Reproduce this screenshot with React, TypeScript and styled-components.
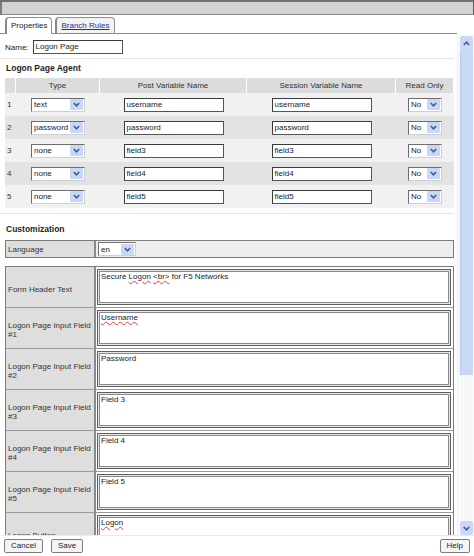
import React from 'react';
import styled, { createGlobalStyle } from 'styled-components';

const Global = createGlobalStyle`
  html, body { margin: 0; padding: 0; background: #fff; }
  body { font-family: "Liberation Sans", Arial, sans-serif; font-size: 8px; color: #222; }
  * { box-sizing: border-box; }
`;

const Frame = styled.div`
  width: 474px;
  height: 556px;
  display: flex;
  flex-direction: column;
  overflow: hidden;
  background: #fff;
`;

const TitleBar = styled.div`
  flex: none;
  height: 15px;
  background: #d2d2d2;
  border-top: 2px solid #707070;
  border-left: 2px solid #7a7a7a;
  border-right: 1px solid #5c5c5c;
  border-bottom: 1px solid #8a8a8a;
`;

const TabStrip = styled.div`
  flex: none;
  height: 19px;
  width: 457px;
  display: flex;
  align-items: flex-end;
  gap: 3px;
  padding-left: 5px;
  border-bottom: 1px solid #8c8c8c;
`;

const Tab = styled.div<{ $active?: boolean }>`
  height: ${p => (p.$active ? 17 : 16)}px;
  margin-bottom: ${p => (p.$active ? -1 : 0)}px;
  padding: 0 4px;
  line-height: 15px;
  border: 1px solid #8f8f8f;
  border-left: 2px solid #8a8a8a;
  border-bottom: none;
  border-radius: 4px 4px 0 0;
  background: ${p => (p.$active ? '#fff' : '#f3f3f3')};
  color: ${p => (p.$active ? '#222' : '#2c2c9c')};
  text-decoration: ${p => (p.$active ? 'none' : 'underline')};
`;

const Body = styled.div`
  flex: 1;
  display: flex;
  min-height: 0;
`;

const Content = styled.div`
  width: 457px;
  flex: none;
  overflow: hidden;
  padding-left: 5px;
  padding-right: 3px;
`;

const Scrollbar = styled.div`
  width: 17px;
  flex: none;
  display: flex;
  flex-direction: column;
  padding: 2px 1px 0 2px;
  background: #fafafa;
  border-left: 1px solid #efefef;
`;

const ScrollButton = styled.div`
  height: 14px;
  flex: none;
  display: flex;
  align-items: center;
  justify-content: center;
  background: #c9d8f7;
  border-radius: 2px;
`;

const Thumb = styled.div`
  height: 325px;
  flex: none;
  background: #c9d8f7;
  border-left: 1px solid #b8c9ee;
`;

const Track = styled.div`
  flex: 1;
  background: #f8f8f8;
`;

const NameRow = styled.div`
  margin-top: 6px;
  height: 14px;
  display: flex;
  align-items: center;
  gap: 4px;
`;

const TextInput = styled.div<{ $w: number }>`
  width: ${p => p.$w}px;
  height: 14px;
  line-height: 12px;
  padding: 0 2px;
  border: 1px solid #3a3a3a;
  border-right-color: #555;
  border-bottom-color: #555;
  background: #fff;
  color: #222;
  white-space: nowrap;
  overflow: hidden;
`;

const Separator = styled.div<{ $top: number }>`
  margin-top: ${p => p.$top}px;
  margin-left: -5px;
  height: 1px;
  background: #e4e4e4;
`;

const SectionTitle = styled.div<{ $top: number }>`
  margin-top: ${p => p.$top}px;
  height: 12px;
  line-height: 12px;
  padding-left: 1px;
  font-weight: bold;
  font-size: 8.5px;
  color: #1e1e1e;
`;

const AgentTable = styled.div`
  margin-top: 4px;
  width: 449px;
  display: grid;
  grid-template-columns: 11px 84px 147px 149px 58px;
`;

const HeadCell = styled.div`
  height: 15px;
  line-height: 15px;
  background: #dcdcdc;
  border-right: 1px solid #fff;
  text-align: center;
  color: #333;
  &:last-child { border-right: none; }
`;

const Cell = styled.div<{ $alt: boolean; $left?: boolean }>`
  height: 23px;
  display: flex;
  align-items: center;
  justify-content: ${p => (p.$left ? 'flex-start' : 'center')};
  padding-left: ${p => (p.$left ? 2 : 0)}px;
  background: ${p => (p.$alt ? '#e3e3e3' : '#f1f1f1')};
  color: #333;
`;

const SelectBox = styled.div<{ $w: number }>`
  width: ${p => p.$w}px;
  height: 14px;
  display: flex;
  align-items: center;
  background: #fff;
  border: 1px solid #cfcfcf;
  border-top-color: #6e6e6e;
  border-left-color: #6e6e6e;
  padding-left: 2px;
`;

const SelectText = styled.span`
  flex: 1;
  color: #222;
  white-space: nowrap;
`;

const SelectArrow = styled.span`
  width: 13px;
  height: 11px;
  margin-right: 1px;
  display: flex;
  align-items: center;
  justify-content: center;
  background: #c8d7f6;
  border-radius: 1px;
`;

const Chevron = ({ up }: { up?: boolean }) => (
  <svg width="7" height="5" viewBox="0 0 7 5">
    <polyline
      points={up ? '0.8,4 3.5,1.2 6.2,4' : '0.8,1 3.5,3.8 6.2,1'}
      fill="none"
      stroke="#3f5a93"
      strokeWidth="1.5"
    />
  </svg>
);

const Select = ({ value, w }: { value: string; w: number }) => (
  <SelectBox $w={w}>
    <SelectText>{value}</SelectText>
    <SelectArrow>
      <Chevron />
    </SelectArrow>
  </SelectBox>
);

const LangTable = styled.div`
  margin-top: 5px;
  width: 449px;
  height: 18px;
  display: grid;
  grid-template-columns: 90px 1fr;
  border: 1px solid #7c7c7c;
`;

const LangLabel = styled.div`
  display: flex;
  align-items: center;
  padding-left: 2px;
  background: #dedede;
  border-right: 2px solid #8a8a8a;
  color: #333;
`;

const LangValue = styled.div`
  display: flex;
  align-items: center;
  padding-left: 2px;
  background: #eeeeee;
`;

const FieldTable = styled.div`
  margin-top: 8px;
  width: 449px;
  display: grid;
  grid-template-columns: 90px 1fr;
  border: 1px solid #7c7c7c;
  border-bottom: none;
`;

const FieldLabel = styled.div`
  height: 41px;
  display: flex;
  align-items: center;
  padding: 4px 2px 0;
  background: #dedede;
  border-right: 2px solid #8a8a8a;
  border-bottom: 1px solid #9a9a9a;
  color: #333;
  line-height: 9px;
`;

const FieldCell = styled.div`
  height: 41px;
  padding: 2px 2px 2px 1px;
  background: #fff;
  border-bottom: 1px solid #9a9a9a;
`;

const TextArea = styled.div`
  height: 100%;
  padding: 2px 3px;
  border: 1px solid #5e5e5e;
  box-shadow: inset 0 0 0 1px #e6e6e6, inset 0 0 0 2px #8a8a8a;
  color: #222;
  line-height: 10px;
`;

const Misspelled = styled.span`
  text-decoration: underline wavy #e04040;
  text-decoration-thickness: 1px;
  text-underline-offset: 1px;
`;

const Footer = styled.div`
  flex: none;
  height: 21px;
  display: flex;
  align-items: center;
  gap: 8px;
  padding: 0 4px;
  border-top: 1px solid #ececec;
`;

const Button = styled.button`
  height: 14px;
  padding: 0 6px;
  font-family: "Liberation Sans", Arial, sans-serif;
  font-size: 8px;
  line-height: 12px;
  color: #222;
  background: #f4f4f4;
  border: 1px solid #7c7c7c;
  border-radius: 2px;
`;

const Spacer = styled.div`
  flex: 1;
`;

const rows = [
  { type: 'text', post: 'username', session: 'username' },
  { type: 'password', post: 'password', session: 'password' },
  { type: 'none', post: 'field3', session: 'field3' },
  { type: 'none', post: 'field4', session: 'field4' },
  { type: 'none', post: 'field5', session: 'field5' },
];

const fields: { label: string; value: React.ReactNode }[] = [
  {
    label: 'Form Header Text',
    value: (
      <>
        Secure <Misspelled>Logon</Misspelled> <Misspelled>&lt;br&gt;</Misspelled> for F5 Networks
      </>
    ),
  },
  { label: 'Logon Page Input Field #1', value: <Misspelled>Username</Misspelled> },
  { label: 'Logon Page Input Field #2', value: 'Password' },
  { label: 'Logon Page Input Field #3', value: 'Field 3' },
  { label: 'Logon Page Input Field #4', value: 'Field 4' },
  { label: 'Logon Page Input Field #5', value: 'Field 5' },
  { label: 'Logon Button', value: <Misspelled>Logon</Misspelled> },
];

export default function App() {
  return (
    <Frame>
      <Global />
      <TitleBar />
      <TabStrip>
        <Tab $active>Properties</Tab>
        <Tab>Branch Rules</Tab>
      </TabStrip>
      <Body>
        <Content>
          <NameRow>
            <span>Name:</span>
            <TextInput $w={90}>Logon Page</TextInput>
          </NameRow>
          <Separator $top={4} />
          <SectionTitle $top={3}>Logon Page Agent</SectionTitle>
          <AgentTable>
            <HeadCell />
            <HeadCell>Type</HeadCell>
            <HeadCell>Post Variable Name</HeadCell>
            <HeadCell>Session Variable Name</HeadCell>
            <HeadCell>Read Only</HeadCell>
            {rows.map((r, i) => {
              const alt = i % 2 === 1;
              return (
                <React.Fragment key={i}>
                  <Cell $alt={alt} $left>{i + 1}</Cell>
                  <Cell $alt={alt}>
                    <Select value={r.type} w={54} />
                  </Cell>
                  <Cell $alt={alt}>
                    <TextInput $w={100}>{r.post}</TextInput>
                  </Cell>
                  <Cell $alt={alt}>
                    <TextInput $w={100}>{r.session}</TextInput>
                  </Cell>
                  <Cell $alt={alt}>
                    <Select value="No" w={34} />
                  </Cell>
                </React.Fragment>
              );
            })}
          </AgentTable>
          <Separator $top={5} />
          <SectionTitle $top={9}>Customization</SectionTitle>
          <LangTable>
            <LangLabel>Language</LangLabel>
            <LangValue>
              <Select value="en" w={38} />
            </LangValue>
          </LangTable>
          <FieldTable>
            {fields.map(f => (
              <React.Fragment key={f.label}>
                <FieldLabel>{f.label}</FieldLabel>
                <FieldCell>
                  <TextArea>{f.value}</TextArea>
                </FieldCell>
              </React.Fragment>
            ))}
          </FieldTable>
        </Content>
        <Scrollbar>
          <ScrollButton>
            <Chevron up />
          </ScrollButton>
          <Thumb />
          <Track />
          <ScrollButton>
            <Chevron />
          </ScrollButton>
        </Scrollbar>
      </Body>
      <Footer>
        <Button>Cancel</Button>
        <Button>Save</Button>
        <Spacer />
        <Button>Help</Button>
      </Footer>
    </Frame>
  );
}
